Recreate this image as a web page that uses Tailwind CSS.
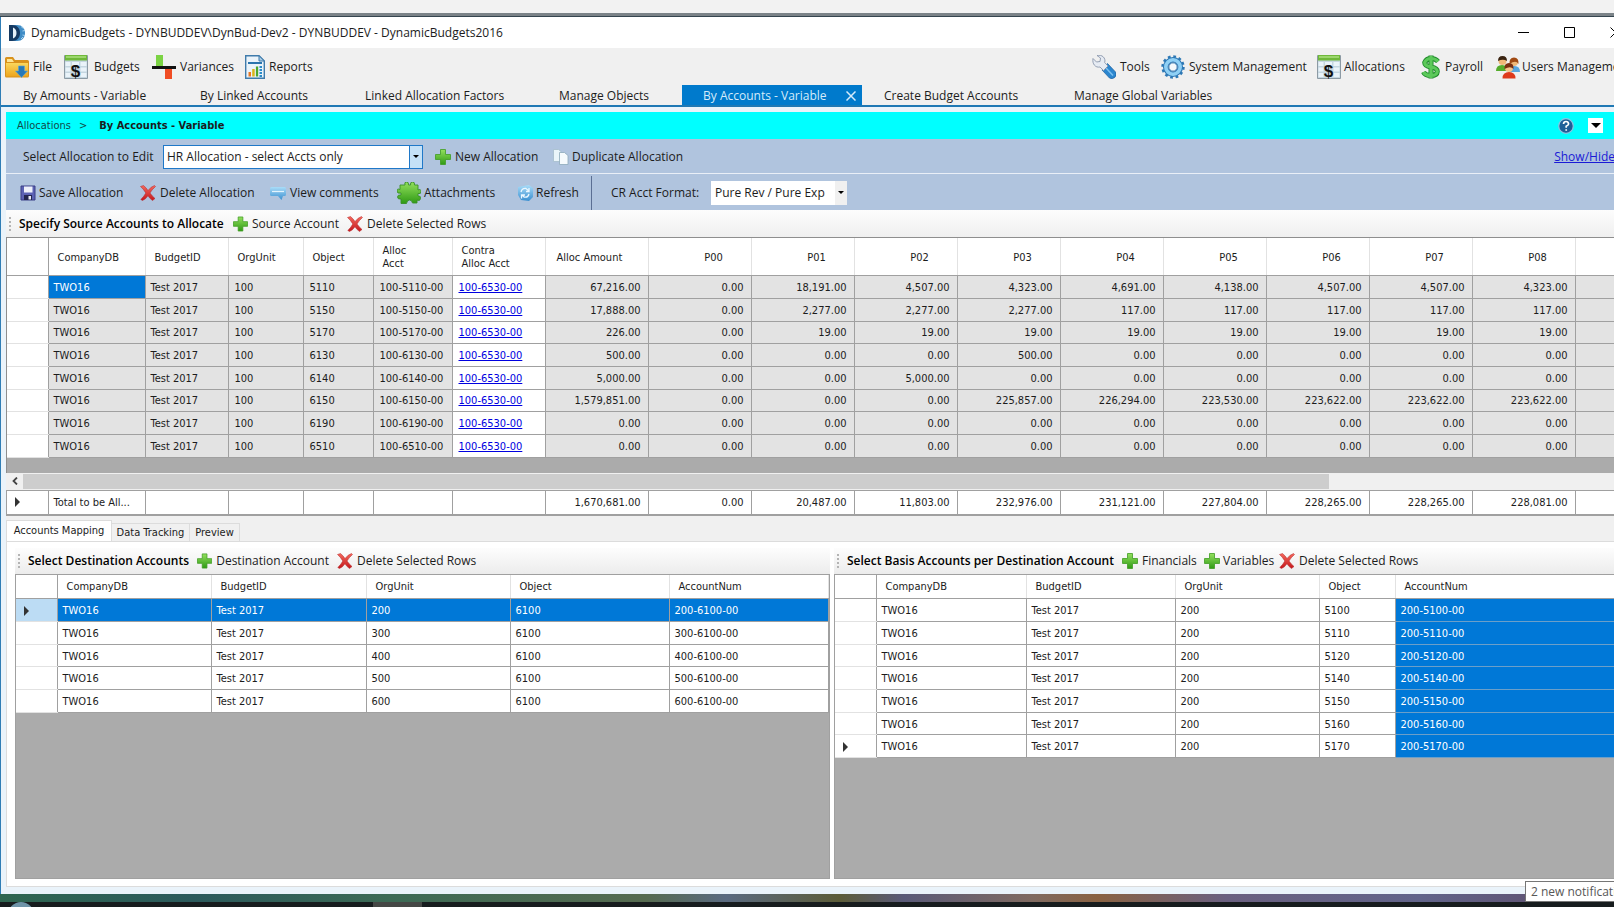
<!DOCTYPE html>
<html lang="en">
<head>
    <meta charset="UTF-8">
    <meta name="viewport" content="width=device-width, initial-scale=1.0">
    <title>DynamicBudgets - By Accounts - Variable</title>
    <script src="https://cdn.jsdelivr.net/npm/@tailwindcss/browser@4"></script>
</head>
<body class="h-screen overflow-hidden bg-[#f2f2f2] font-['Open_Sans','Noto_Sans',sans-serif] text-[12px] leading-4 text-[#1c1c1c] whitespace-nowrap">

    <!-- Icon sprite -->
    <svg class="absolute size-0">
        <defs>
            <linearGradient id="g-green" x1="0" y1="0" x2="0" y2="1"><stop offset="0" stop-color="#93e05e"/><stop offset="1" stop-color="#2f9a14"/></linearGradient>
            <linearGradient id="g-red" x1="0" y1="0" x2="0" y2="1"><stop offset="0" stop-color="#f4685c"/><stop offset="1" stop-color="#c4181c"/></linearGradient>
            <linearGradient id="g-blue" x1="0" y1="0" x2="0" y2="1"><stop offset="0" stop-color="#a9dcf8"/><stop offset="1" stop-color="#3a8fd0"/></linearGradient>
            <linearGradient id="g-folder" x1="0" y1="0" x2="0" y2="1"><stop offset="0" stop-color="#fbd75c"/><stop offset="1" stop-color="#eda51d"/></linearGradient>
        </defs>
        <symbol id="i-logo" viewBox="0 0 16 16">
            <path d="M3 0h5c5 0 8 3.500 8 8s-3 8-8 8H3z" fill="#3f8cc6"/>
            <path d="M12 1.500l2.500 2M13.500 6l2.500-.5M13.500 10l2.500.5M12 14l2-2" stroke="#a9d3ee" stroke-width="1"/>
            <path d="M0 0h3c5 0 8 3.500 8 8s-3 8-8 8H0z" fill="#163a62"/>
            <path d="M4 2.500c2.500 1 3.500 3 3.500 5.500s-1 4.500-3.500 5.500z" fill="#e6f1f8"/>
        </symbol>
        <symbol id="i-folder" viewBox="0 0 24 24">
            <path d="M0 3.500q0-1.500 1.500-1.500H8l2 3h12.500q1.500 0 1.500 1.500V21q0 1.500-1.500 1.500h-21Q0 22.500 0 21z" fill="#d9921c"/>
            <path d="M1 8h22v13.500H1z" fill="url(#g-folder)"/>
            <path d="M2 4h5l2 3H2z" fill="#fde596"/>
            <path d="M13.500 11h6v5h3l-6 6.500-6-6.500h3z" fill="#2779b8" stroke="#5aa6d8" stroke-width=".6"/>
        </symbol>
        <symbol id="i-sheet" viewBox="0 0 24 24">
            <path d="M.5.5h23v23H.5z" fill="#c5d6e0" stroke="#8c9aa4"/>
            <path d="M1 0h22v5.500H1z" fill="#6fb83a"/>
            <path d="M2 1h20v2H2z" fill="#9bd66c"/>
            <path d="M1.500 7h5v4h-5zM8 7h7v4H8zM16.500 7h6v4h-6zM1.500 12.500h5v4h-5zM16.500 12.500h6v4h-6zM1.500 18h5v4h-5zM16.500 18h6v4h-6z" fill="#eaf3f9"/>
            <text x="11.500" y="22" text-anchor="middle" font-family="Liberation Sans" font-weight="bold" font-size="17" fill="#111">$</text>
        </symbol>
        <symbol id="i-variance" viewBox="0 0 24 24">
            <path d="M4 0h7v11H4z" fill="#7bd343"/>
            <path d="M13 14h7v10h-7z" fill="#f04d24"/>
            <path d="M0 11h24v3H0z" fill="#111"/>
        </symbol>
        <symbol id="i-report" viewBox="0 0 20 24">
            <path d="M.7.7H14l5.300 5.300v17.300H.7z" fill="#eaf3fa" stroke="#3f7bab" stroke-width="1.400"/>
            <path d="M14 .7V6h5.300z" fill="#a9cbe4" stroke="#3f7bab"/>
            <path d="M3 7h14v2H3z" fill="#2a74ad"/>
            <path d="M3.500 17H6v4.500H3.500z" fill="#e87722"/>
            <path d="M7.200 14h2.500v7.500H7.200z" fill="#d9b41a"/>
            <path d="M10.900 11.500h2.300v10h-2.300z" fill="#4ba62f"/>
            <path d="M14.500 11H17v2h-2.500zM14.500 14H17v2h-2.500zM14.500 17H17v2h-2.500zM14.500 20H17v2h-2.500z" fill="#2a8bc8"/>
        </symbol>
        <symbol id="i-wrench" viewBox="0 0 24 24">
            <path d="M13 11l2.500-2.500 8 8.500q1.500 3-.8 5.500-2.500 2-5.200.5L10 15z" fill="#2b86cf" stroke="#1b5f9d" stroke-width=".7"/>
            <path d="M14 13l7 7.500" stroke="#7cc0f0" stroke-width="1.500"/>
            <path d="M1 3.500L4.500 7 8 6.500 8.500 3 5 .5C10-.8 14 3 12.700 7.500L16 11l-4.500 4.500L8 12C3.500 13 0 9 1 3.500z" fill="#e6ebf3" stroke="#8a96ab" stroke-width=".9"/>
        </symbol>
        <symbol id="i-gear" viewBox="0 0 24 24">
            <circle cx="12" cy="12" r="10.300" fill="none" stroke="#2d78b5" stroke-width="2.800" stroke-dasharray="2.700 2.690"/>
            <circle cx="12" cy="12" r="7.300" fill="none" stroke="#2d78b5" stroke-width="5.500"/>
            <circle cx="12" cy="12" r="7.200" fill="none" stroke="#8fd0f5" stroke-width="3.600"/>
            <circle cx="12" cy="12" r="4.200" fill="#f4f8fb" stroke="#2d6fa8" stroke-width="1"/>
        </symbol>
        <symbol id="i-dollar" viewBox="0 0 20 24">
            <path d="M17 6.500Q14.500 3.500 10 3.500T3.700 7.500Q3.700 11 10 12t6.300 4.500Q16 20.500 10 20.500T2.500 17M10 .5v23" fill="none" stroke="#1f8a2b" stroke-width="5"/>
            <path d="M17 6.500Q14.500 3.500 10 3.500T3.700 7.500Q3.700 11 10 12t6.300 4.500Q16 20.500 10 20.500T2.500 17M10 1v22" fill="none" stroke="#5cc95a" stroke-width="3.200"/>
        </symbol>
        <symbol id="i-users" viewBox="0 0 24 24">
            <path d="M0 16q0-6 6-6t6 6z" fill="#55ad2c"/>
            <path d="M13 17q0-6 5.500-6T24 17z" fill="#5aa7df"/>
            <circle cx="6.500" cy="6" r="4" fill="#f0b877"/><path d="M2 6q0-5 4.500-5T11 6Q7 3.500 2 6z" fill="#3a2412"/>
            <circle cx="18" cy="7" r="4" fill="#f0b877"/><path d="M13.500 9q-.5-6.500 4.500-6.500T22.500 9Q20 4.500 13.500 9z" fill="#a04a14"/>
            <path d="M6.500 23.500q0-6.500 6.500-6.500t6.500 6.500z" fill="#de3a1c"/>
            <circle cx="13" cy="13" r="4" fill="#f5c48a"/><path d="M8.500 14q-.5-6 4.500-6t4.500 6q-3-3.500-9 0z" fill="#7a2f10"/>
        </symbol>
        <symbol id="i-plus" viewBox="0 0 16 16">
            <path d="M5.500.5h5v5h5v5h-5v5h-5v-5h-5v-5h5z" fill="url(#g-green)" stroke="#3f9c22" stroke-width=".8"/>
        </symbol>
        <symbol id="i-cross" viewBox="0 0 16 16">
            <path d="M.5 1.500L3.500.5Q6 2.500 8 5.500 11 1.500 14.500.5l1 1Q12 4.500 10 8q2.500 3.500 5 5.500l-2.500 2Q9.500 13.500 8 10.800 6 14 2.500 15.500L.8 14.500Q4 11.500 5.800 8 3.500 4 .5 1.500z" fill="url(#g-red)" stroke="#b3272a" stroke-width=".5"/>
        </symbol>
        <symbol id="i-copy" viewBox="0 0 16 16">
            <path d="M.5.5h5l2.500 2v10H.5z" fill="#eaf5fa" stroke="#a5bccb" stroke-width=".8"/>
            <path d="M6.500 3.500h5l3.500 3v9H6.500z" fill="#f6fbfd" stroke="#8da9ba" stroke-width=".8"/>
        </symbol>
        <symbol id="i-save" viewBox="0 0 16 16">
            <path d="M1 1h14v14H1z" fill="#5c62b4" stroke="#3b3f86"/>
            <path d="M4 1.500h8.500v6H4z" fill="#eef0fa"/>
            <path d="M4 10h8v5H4z" fill="#23264f"/><path d="M8.500 11H11v3.500H8.500z" fill="#e8eaf6"/>
        </symbol>
        <symbol id="i-comment" viewBox="0 0 16 16">
            <path d="M1.500 2h13q1.500 0 1.500 1.500v6q0 1.500-1.500 1.500H13l-1.500 4L8 11H1.500Q0 11 0 9.500v-6Q0 2 1.500 2z" fill="url(#g-blue)"/>
            <path d="M2 6.500h12" stroke="#e3f4fd" stroke-width="1.200"/>
        </symbol>
        <symbol id="i-puzzle" viewBox="0 0 24 22">
            <path d="M3 3h5q-1-3 1.500-3t2 3h2q-.5-3 2-3t2 3H21v5q3-1.500 3 1.500t-3 2V14q3-.5 2.500 2.500T20 18v3h-4.500q-.5-3-3-3t-3 3.500H4V17q-3.500.5-3.500-2T4 13v-2Q0 12 0 9t3-1.500z" fill="url(#g-green)" stroke="#3a8f28" stroke-width=".9"/>
        </symbol>
        <symbol id="i-refresh" viewBox="0 0 16 16">
            <path d="M1 2l11-2 4 3v9l-4 4-8-1-3-5z" fill="url(#g-blue)"/>
            <path d="M4 7q1-4 5-3.500L12 6M12 9q-1 4-5 3L5 10M12 3v3.500H9M4.500 13.500V10H8" fill="none" stroke="#eaf7ff" stroke-width="1.300"/>
        </symbol>
        <symbol id="i-help" viewBox="0 0 16 16">
            <circle cx="8" cy="8" r="7.300" fill="#1f5f97" stroke="#8fc4e2" stroke-width="1.200"/>
            <path d="M5.500 6Q5.700 3.500 8 3.500T10.600 6Q10.500 7.200 8.200 8.300v1.500M8.200 11.200v1.600" fill="none" stroke="#fff" stroke-width="1.700"/>
        </symbol>
        <symbol id="i-down" viewBox="0 0 8 4"><path d="M0 0h8L4 4z"/></symbol>
        <symbol id="i-right" viewBox="0 0 5 10"><path d="M0 0l5 5-5 5z" fill="#333"/></symbol>
    </svg>

    <div class="flex h-full flex-col">
        <div class="h-[13px] shrink-0"></div>
        <div class="h-1 shrink-0 border-b border-[#35454f] bg-[#7b8388]"></div>

        <!-- App window, runs past the right edge of the screen -->
        <div class="flex min-h-0 w-[calc(100%+24px)] flex-1 flex-col border-l border-[#2f7db5] bg-[#f0f0f0]">

            <header class="flex h-[31px] shrink-0 items-center bg-white pl-2">
                <svg class="mr-[6px] size-4"><use href="#i-logo"/></svg>
                <h1>DynamicBudgets - DYNBUDDEV\DynBud-Dev2 - DYNBUDDEV - DynamicBudgets2016</h1>
                <div class="ml-auto flex">
                    <button aria-label="Minimize" class="flex w-[46px] justify-center"><svg class="size-[11px]" viewBox="0 0 11 11"><path d="M0 5.500h11" stroke="#000"/></svg></button>
                    <button aria-label="Maximize" class="flex w-[46px] justify-center"><svg class="size-[11px]" viewBox="0 0 11 11"><path d="M.5.5h10v10H.5z" fill="none" stroke="#000"/></svg></button>
                    <button aria-label="Close" class="flex w-[46px] justify-center"><svg class="size-[11px]" viewBox="0 0 11 11"><path d="M.5.500l10 10M10.500.500l-10 10" stroke="#000"/></svg></button>
                </div>
            </header>

            <!-- Main menu -->
            <nav class="flex h-[37px] shrink-0 items-center pt-px pl-1">
                <button class="flex w-[59px] items-center gap-1"><svg class="size-6"><use href="#i-folder"/></svg>File</button>
                <button class="flex w-[88px] items-center gap-[6px]"><svg class="size-6"><use href="#i-sheet"/></svg>Budgets</button>
                <button class="flex w-[93px] items-center gap-1"><svg class="size-6"><use href="#i-variance"/></svg>Variances</button>
                <button class="flex items-center gap-1"><svg class="h-6 w-5"><use href="#i-report"/></svg>Reports</button>
                <div class="ml-auto flex">
                    <button class="flex w-[69px] items-center gap-1"><svg class="size-6"><use href="#i-wrench"/></svg>Tools</button>
                    <button class="flex w-[156px] items-center gap-1"><svg class="size-6"><use href="#i-gear"/></svg>System Management</button>
                    <button class="flex w-[104px] items-center gap-[3px]"><svg class="size-6"><use href="#i-sheet"/></svg>Allocations</button>
                    <button class="flex w-[75px] items-center gap-1"><svg class="h-6 w-5"><use href="#i-dollar"/></svg>Payroll</button>
                    <button class="flex w-[142px] items-center gap-[2px]"><svg class="size-6"><use href="#i-users"/></svg>Users Management</button>
                </div>
            </nav>

            <!-- Document tabs -->
            <div class="flex h-[22px] shrink-0 border-b-2 border-[#1f78b4]">
                <button class="w-[177px] pt-[2px] pl-[22px] text-left">By Amounts - Variable</button>
                <button class="w-[165px] pt-[2px] pl-[22px] text-left">By Linked Accounts</button>
                <button class="w-[194px] pt-[2px] pl-[22px] text-left">Linked Allocation Factors</button>
                <button class="w-[145px] pt-[2px] pl-[22px] text-left">Manage Objects</button>
                <button class="flex w-[180px] items-center justify-between bg-[#007acc] pt-[2px] pr-[6px] pl-[21px] text-[#d5ebfa]">By Accounts - Variable
                    <svg class="size-[10px]" viewBox="0 0 10 10"><path d="M.5.500l9 9M9.500.500l-9 9" stroke="#d5ebfa" stroke-width="1.500"/></svg>
                </button>
                <button class="w-[190px] pt-[2px] pl-[22px] text-left">Create Budget Accounts</button>
                <button class="pt-[2px] pl-[22px]">Manage Global Variables</button>
            </div>

            <main class="flex min-h-0 flex-1 flex-col bg-[#eaf3fa] pt-[5px] pl-[5px]">
                <div class="flex h-[27px] shrink-0 items-center bg-[#00ffff] pl-[11px] font-['DejaVu_Sans_Condensed','DejaVu_Sans',sans-serif] text-[11px]">
                    <a href="#" class="text-[#124a4a]">Allocations</a>
                    <span class="ml-2 text-[#124a4a]">&gt;</span>
                    <b class="ml-3">By Accounts - Variable</b>
                    <button aria-label="Help" class="mr-[14px] ml-auto"><svg class="size-4"><use href="#i-help"/></svg></button>
                    <button aria-label="More" class="mr-[35px] flex size-[15px] items-center justify-center bg-white"><svg class="h-[5px] w-[10px]"><use href="#i-down"/></svg></button>
                </div>

                <div class="flex h-[34px] shrink-0 items-center bg-[#b0c4de] pt-px pl-[17px]">
                    <label for="allocation" class="w-[140px]">Select Allocation to Edit</label>
                    <div class="relative">
                        <select id="allocation" class="h-6 w-[260px] appearance-none border border-[#1f78c8] bg-white pl-[3px]">
                            <option>HR Allocation - select Accts only</option>
                        </select>
                        <span class="pointer-events-none absolute inset-y-0 right-0 flex w-[14px] items-center justify-center border border-[#1f78c8] bg-[#c4e1f7]"><svg class="h-[3px] w-[6px]"><use href="#i-down"/></svg></span>
                    </div>
                    <button class="ml-3 flex w-[118px] items-center gap-1"><svg class="size-4"><use href="#i-plus"/></svg>New Allocation</button>
                    <button class="flex items-center gap-[3px]"><svg class="size-4"><use href="#i-copy"/></svg>Duplicate Allocation</button>
                    <a href="#" class="mr-[23px] ml-auto text-[#1a1ad6] underline">Show/Hide</a>
                </div>

                <div class="flex h-[37px] shrink-0 items-center border-t border-[#e9eff7] bg-[#b0c4de] pt-px pl-[14px]">
                    <button class="flex w-[120px] items-center gap-[3px]"><svg class="size-4"><use href="#i-save"/></svg>Save Allocation</button>
                    <button class="flex w-[130px] items-center gap-1"><svg class="size-4"><use href="#i-cross"/></svg>Delete Allocation</button>
                    <button class="flex w-[127px] items-center gap-1"><svg class="size-4"><use href="#i-comment"/></svg>View comments</button>
                    <button class="flex w-[120px] items-center gap-[3px]"><svg class="h-[22px] w-6"><use href="#i-puzzle"/></svg>Attachments</button>
                    <button class="flex w-[74px] items-center gap-[3px]"><svg class="size-4"><use href="#i-refresh"/></svg>Refresh</button>
                    <div class="h-[34px] border-l border-[#5b6f93]"></div>
                    <label for="format" class="ml-[19px] w-[100px]">CR Acct Format:</label>
                    <div class="relative">
                        <select id="format" class="h-6 w-[136px] appearance-none bg-white pl-1">
                            <option>Pure Rev / Pure Exp</option>
                        </select>
                        <span class="pointer-events-none absolute inset-y-0 right-0 flex w-3 items-center justify-center bg-[#f0f0f0]"><svg class="h-[3px] w-[6px]"><use href="#i-down"/></svg></span>
                    </div>
                </div>

                <div class="flex h-[27px] shrink-0 items-center gap-2 bg-linear-to-b from-[#fdfdfd] to-[#efefef] pl-[3px]">
                    <span class="h-[14px] border-l-2 border-dotted border-[#b4b4b4]"></span>
                    <h2 class="w-[206px] font-semibold text-black">Specify Source Accounts to Allocate</h2>
                    <button class="flex w-[106px] items-center gap-1"><svg class="size-4"><use href="#i-plus"/></svg>Source Account</button>
                    <button class="flex items-center gap-1"><svg class="size-4"><use href="#i-cross"/></svg>Delete Selected Rows</button>
                </div>

                <!-- Source accounts -->
                <div class="shrink-0 overflow-hidden border-t border-l border-[#8e8e8e] bg-[#ababab] pb-[15px] font-['DejaVu_Sans_Condensed','DejaVu_Sans',sans-serif] text-[11px] leading-[13px]">
                    <table class="w-full table-fixed">
                        <colgroup>
                            <col class="w-[41px]"><col class="w-[97px]"><col class="w-[83px]"><col class="w-[75px]"><col class="w-[70px]"><col class="w-[79px]"><col class="w-[93px]">
                            <col class="w-[103px]" span="10"><col>
                        </colgroup>
                        <thead>
                            <tr id="source-head" class="h-[37px] bg-white [&>th]:pt-[2px]"></tr>
                        </thead>
                        <tbody id="source-rows" class="[&_td]:pt-px [&>tr]:h-[23px] [&>tr:nth-child(3n)]:h-[22px]"></tbody>
                    </table>
                </div>

                <!-- Horizontal scrollbar -->
                <div class="flex h-[17px] shrink-0 items-center border-y border-[#f0f0f0] bg-[#f0f0f0]">
                    <button aria-label="Scroll left" class="flex w-[17px] justify-center"><svg class="h-2 w-[6px]" viewBox="0 0 6 8"><path d="M5 .500L1.500 4 5 7.500" fill="none" stroke="#444" stroke-width="1.800"/></svg></button>
                    <div class="h-full w-[80%] bg-[#cdcdcd]"></div>
                </div>

                <div class="shrink-0 overflow-hidden border-t border-b-2 border-l border-[#a0a0a0] bg-white font-['DejaVu_Sans_Condensed','DejaVu_Sans',sans-serif] text-[11px] leading-[13px]">
                    <table class="w-full table-fixed">
                        <colgroup>
                            <col class="w-[41px]"><col class="w-[97px]"><col class="w-[83px]"><col class="w-[75px]"><col class="w-[70px]"><col class="w-[79px]"><col class="w-[93px]">
                            <col class="w-[103px]" span="10"><col>
                        </colgroup>
                        <tbody>
                            <tr id="total-row" class="h-[23px]"></tr>
                        </tbody>
                    </table>
                </div>

                <!-- Detail tabs -->
                <div class="flex h-[25px] shrink-0 items-end bg-[#f0f0f0] font-['DejaVu_Sans_Condensed','DejaVu_Sans',sans-serif] text-[11px]">
                    <button class="h-[21px] w-[106px] border-x border-t border-[#dcdcdc] bg-white">Accounts Mapping</button>
                    <button class="h-[18px] w-[78px] border-t border-r border-[#dcdcdc] pt-px">Data Tracking</button>
                    <button class="h-[18px] w-[50px] border-t border-r border-[#dcdcdc] pt-px">Preview</button>
                </div>

                <div class="mb-[7px] grid min-h-0 flex-1 grid-cols-[815fr_795fr] gap-1 border border-[#dcdcdc] bg-white px-2 pt-[6px] pb-[7px]">
                    <section class="flex min-w-0 flex-col">
                        <div class="flex h-[26px] items-center gap-2 bg-linear-to-b from-[#fdfdfd] to-[#ececec] pl-[3px]">
                            <span class="h-[14px] border-l-2 border-dotted border-[#b4b4b4]"></span>
                            <h2 class="w-[161px] font-semibold text-black">Select Destination Accounts</h2>
                            <button class="flex w-[132px] items-center gap-1"><svg class="size-4"><use href="#i-plus"/></svg>Destination Account</button>
                            <button class="flex items-center gap-1"><svg class="size-4"><use href="#i-cross"/></svg>Delete Selected Rows</button>
                        </div>
                        <div class="flex-1 border border-[#a0a0a0] bg-[#ababab] font-['DejaVu_Sans_Condensed','DejaVu_Sans',sans-serif] text-[11px] leading-[13px]">
                            <table class="w-full table-fixed bg-white">
                                <colgroup><col class="w-[41px]"><col class="w-[154px]"><col class="w-[155px]"><col class="w-[144px]"><col class="w-[159px]"><col></colgroup>
                                <thead><tr class="detail-head h-6 [&>th]:pt-px"></tr></thead>
                                <tbody id="destination-rows" class="[&_td]:pt-px [&>tr]:h-[23px] [&>tr:nth-child(3n)]:h-[22px]"></tbody>
                            </table>
                        </div>
                    </section>

                    <section class="flex min-w-0 flex-col">
                        <div class="flex h-[26px] items-center gap-2 bg-linear-to-b from-[#fdfdfd] to-[#ececec] pl-[3px]">
                            <span class="h-[14px] border-l-2 border-dotted border-[#b4b4b4]"></span>
                            <h2 class="w-[267px] font-semibold text-black">Select Basis Accounts per Destination Account</h2>
                            <button class="flex w-[74px] items-center gap-1"><svg class="size-4 shrink-0"><use href="#i-plus"/></svg>Financials</button>
                            <button class="flex w-[67px] items-center gap-[3px]"><svg class="size-4 shrink-0"><use href="#i-plus"/></svg>Variables</button>
                            <button class="flex items-center gap-1"><svg class="size-4"><use href="#i-cross"/></svg>Delete Selected Rows</button>
                        </div>
                        <div class="flex-1 border border-[#a0a0a0] bg-[#ababab] font-['DejaVu_Sans_Condensed','DejaVu_Sans',sans-serif] text-[11px] leading-[13px]">
                            <table class="w-full table-fixed bg-white">
                                <colgroup><col class="w-[41px]"><col class="w-[150px]"><col class="w-[149px]"><col class="w-[144px]"><col class="w-[76px]"><col></colgroup>
                                <thead><tr class="detail-head h-6 [&>th]:pt-px"></tr></thead>
                                <tbody id="basis-rows" class="[&_td]:pt-px [&>tr]:h-[23px] [&>tr:nth-child(3n)]:h-[22px]"></tbody>
                            </table>
                        </div>
                    </section>
                </div>
            </main>
        </div>

        <!-- Desktop wallpaper and taskbar -->
        <div class="h-2 shrink-0 bg-[linear-gradient(90deg,#2f6650,#2c5a5c_12%,#3c6a55_24%,#566b50_40%,#5a6a80_45%,#5c5c38_52%,#5a5a78_56%,#806a60_64%,#8a6242_68%,#6a6080_76%,#62648a_88%,#5e4a66)]"></div>
        <div class="flex h-[5px] shrink-0 items-start overflow-hidden bg-[#171c1e] pl-2">
            <span class="size-[26px] shrink-0 rounded-full bg-[#6f94a8]"></span>
            <span class="ml-[339px] h-full w-[49px] bg-[#454745]"></span>
        </div>
    </div>

    <div class="fixed right-[-36px] bottom-[5px] h-[21px] w-[125px] border border-[#767676] bg-white pl-[5px] leading-5 text-[#575757]">2 new notifications</div>

    <script>
        const arrow = '<svg class="ml-2 h-[10px] w-[5px]"><use href="#i-right"/></svg>';
        const zero = '0.00';

        const sourceRows = [
            ['5110', ['67,216.00', zero, '18,191.00', '4,507.00', '4,323.00', '4,691.00', '4,138.00', '4,507.00', '4,507.00', '4,323.00']],
            ['5150', ['17,888.00', zero, '2,277.00', '2,277.00', '2,277.00', '117.00', '117.00', '117.00', '117.00', '117.00']],
            ['5170', ['226.00', zero, '19.00', '19.00', '19.00', '19.00', '19.00', '19.00', '19.00', '19.00']],
            ['6130', ['500.00', zero, zero, zero, '500.00', zero, zero, zero, zero, zero]],
            ['6140', ['5,000.00', zero, zero, '5,000.00', zero, zero, zero, zero, zero, zero]],
            ['6150', ['1,579,851.00', zero, zero, zero, '225,857.00', '226,294.00', '223,530.00', '223,622.00', '223,622.00', '223,622.00']],
            ['6190', Array(10).fill(zero)],
            ['6510', Array(10).fill(zero)]
        ];
        const totals = ['1,670,681.00', zero, '20,487.00', '11,803.00', '232,976.00', '231,121.00', '227,804.00', '228,265.00', '228,265.00', '228,081.00'];

        // Source grid header
        const textHeads = ['CompanyDB', 'BudgetID', 'OrgUnit', 'Object', 'Alloc<br>Acct', 'Contra<br>Alloc Acct'];
        const periodHeads = ['P00', 'P01', 'P02', 'P03', 'P04', 'P05', 'P06', 'P07', 'P08'];
        document.getElementById('source-head').innerHTML =
            '<th class="border-r border-b border-[#a0a0a0]"></th>' +
            textHeads.map(h => `<th class="border-r border-b border-r-[#e2e2e2] border-b-[#a0a0a0] pl-[9px] text-left font-normal">${h}</th>`).join('') +
            '<th class="border-r border-b border-r-[#e2e2e2] border-b-[#a0a0a0] pl-[11px] text-left font-normal">Alloc Amount</th>' +
            periodHeads.map(h => `<th class="border-r border-b border-r-[#e2e2e2] border-b-[#a0a0a0] pl-7 text-center font-normal">${h}</th>`).join('') +
            '<th class="border-b border-[#a0a0a0]"></th>';

        document.getElementById('source-rows').innerHTML = sourceRows.map(([object, amounts], i) => `
            <tr class="bg-[#e3e3e3]">
                <td class="border-r border-b border-r-[#a0a0a0] border-b-[#e2e2e2] bg-white"></td>
                <td class="border-r border-b border-[#a0a0a0] pl-[5px] ${i === 0 ? 'bg-[#0078d7] text-white' : ''}">TWO16</td>
                <td class="border-r border-b border-[#a0a0a0] pl-[5px]">Test 2017</td>
                <td class="border-r border-b border-[#a0a0a0] pl-[6px]">100</td>
                <td class="border-r border-b border-[#a0a0a0] pl-[6px]">${object}</td>
                <td class="border-r border-b border-[#a0a0a0] pl-[6px]">100-${object}-00</td>
                <td class="border-r border-b border-[#a0a0a0] bg-white pl-[6px]"><a href="#" class="text-[#0000e0] underline">100-6530-00</a></td>
                ${amounts.map(a => `<td class="border-r border-b border-[#a0a0a0] pr-[7px] text-right">${a}</td>`).join('')}
                <td class="border-b border-[#a0a0a0]"></td>
            </tr>`).join('');

        document.getElementById('total-row').innerHTML =
            `<td class="border-r border-[#a0a0a0]">${arrow}</td><td class="border-r border-[#a0a0a0] pl-[5px]">Total to be All...</td>` +
            '<td class="border-r border-[#a0a0a0]"></td>'.repeat(5) +
            totals.map(t => `<td class="border-r border-[#a0a0a0] pr-[7px] text-right">${t}</td>`).join('') + '<td></td>';

        // Detail grids
        document.querySelectorAll('.detail-head').forEach(row => {
            row.innerHTML = '<th class="border-r border-b border-[#a0a0a0]"></th>' +
                ['CompanyDB', 'BudgetID', 'OrgUnit', 'Object', 'AccountNum']
                    .map(h => `<th class="border-r border-b border-r-[#e2e2e2] border-b-[#a0a0a0] pl-[9px] text-left font-normal">${h}</th>`).join('');
        });

        document.getElementById('destination-rows').innerHTML = ['200', '300', '400', '500', '600'].map((unit, i) => `
            <tr class="${i === 0 ? 'bg-[#0078d7] text-white' : ''}">
                <td class="border-r border-b border-r-[#a0a0a0] border-b-[#e2e2e2] ${i === 0 ? 'bg-[#bcdcf4]' : ''}">${i === 0 ? arrow : ''}</td>
                ${['TWO16', 'Test 2017', unit, '6100', unit + '-6100-00'].map(v => `<td class="border-r border-b border-[#a0a0a0] pl-[5px]">${v}</td>`).join('')}
            </tr>`).join('');

        document.getElementById('basis-rows').innerHTML = ['5100', '5110', '5120', '5140', '5150', '5160', '5170'].map((object, i) => `
            <tr>
                <td class="border-r border-b border-r-[#a0a0a0] border-b-[#e2e2e2]">${i === 6 ? arrow : ''}</td>
                ${['TWO16', 'Test 2017', '200', object].map(v => `<td class="border-r border-b border-[#a0a0a0] pl-[5px]">${v}</td>`).join('')}
                <td class="border-b border-[#6c9fc8] bg-[#0078d7] pl-[5px] text-white">200-${object}-00</td>
            </tr>`).join('');
    </script>
</body>
</html>
